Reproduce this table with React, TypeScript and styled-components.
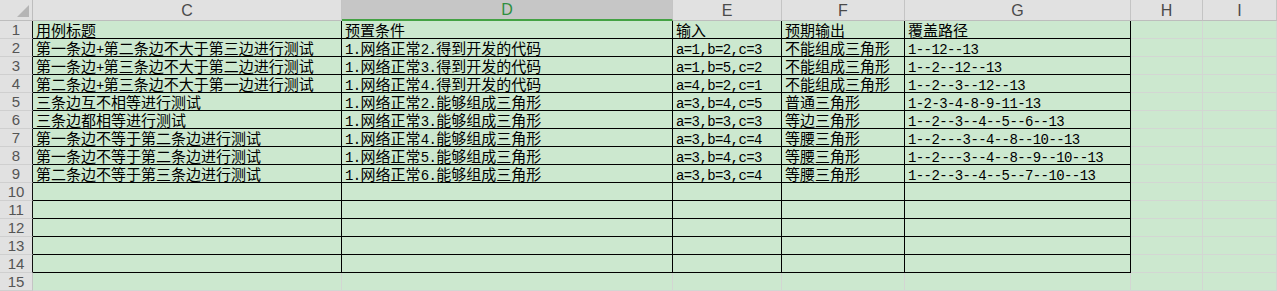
import styled, { createGlobalStyle } from "styled-components";

const GlobalStyle = createGlobalStyle`
  body {
    margin: 0;
    background: #cce8cf;
    overflow: hidden;
  }
`;

const COLS = ["C", "D", "E", "F", "G", "H", "I"];
const ACTIVE_COL = "D";

const rows: string[][] = [
  ["用例标题", "预置条件", "输入", "预期输出", "覆盖路径"],
  ["第一条边+第二条边不大于第三边进行测试", "1.网络正常2.得到开发的代码", "a=1,b=2,c=3", "不能组成三角形", "1--12--13"],
  ["第一条边+第三条边不大于第二边进行测试", "1.网络正常3.得到开发的代码", "a=1,b=5,c=2", "不能组成三角形", "1--2--12--13"],
  ["第二条边+第三条边不大于第一边进行测试", "1.网络正常4.得到开发的代码", "a=4,b=2,c=1", "不能组成三角形", "1--2--3--12--13"],
  ["三条边互不相等进行测试", "1.网络正常2.能够组成三角形", "a=3,b=4,c=5", "普通三角形", "1-2-3-4-8-9-11-13"],
  ["三条边都相等进行测试", "1.网络正常3.能够组成三角形", "a=3,b=3,c=3", "等边三角形", "1--2--3--4--5--6--13"],
  ["第一条边不等于第二条边进行测试", "1.网络正常4.能够组成三角形", "a=3,b=4,c=4", "等腰三角形", "1--2---3--4--8--10--13"],
  ["第一条边不等于第二条边进行测试", "1.网络正常5.能够组成三角形", "a=3,b=4,c=3", "等腰三角形", "1--2---3--4--8--9--10--13"],
  ["第二条边不等于第三条边进行测试", "1.网络正常6.能够组成三角形", "a=3,b=3,c=4", "等腰三角形", "1--2--3--4--5--7--10--13"],
];

// rows 1..14 of C..G carry the black table border
const TABLE_ROWS = 14;
const TABLE_COLS = 5;
const TOTAL_ROWS = 15;

const Sheet = styled.div`
  display: grid;
  grid-template-columns: 33px 309px 331px 109px 123px 226px 72px 74px;
  grid-template-rows: 21px repeat(${TOTAL_ROWS}, 18px);
  width: 1277px;
  font-family: "Noto Sans CJK SC", sans-serif;
`;

const Corner = styled.div`
  background: #e1e1e1;
  border-right: 1px solid #bdbdbd;
  border-bottom: 1px solid #bdbdbd;
  box-sizing: border-box;
  display: flex;
  align-items: flex-end;
  justify-content: flex-end;
  padding: 0 3px 3px 0;
`;

const ColHead = styled.div<{ $active?: boolean }>`
  background: ${(p) => (p.$active ? "#c6c6c6" : "#e1e1e1")};
  border-right: 1px solid #c4c4c4;
  border-bottom: ${(p) => (p.$active ? "2px solid #44a244" : "1px solid #bdbdbd")};
  box-sizing: border-box;
  display: flex;
  align-items: center;
  justify-content: center;
  font-family: "Liberation Sans", Arial, sans-serif;
  font-size: 16px;
  color: ${(p) => (p.$active ? "#2f8f3f" : "#4a4a4a")};
  padding-top: 1px;
`;

const RowHead = styled.div<{ $edge: boolean }>`
  background: #e1e1e1;
  border-right: 1px solid ${(p) => (p.$edge ? "#111" : "#c4c4c4")};
  border-bottom: 1px solid #cfcfcf;
  box-sizing: border-box;
  display: flex;
  align-items: center;
  justify-content: center;
  font-family: "Liberation Sans", Arial, sans-serif;
  font-size: 15px;
  color: #555;
  line-height: 17px;
`;

const Cell = styled.div<{ $line: string }>`
  border-right: 1px solid ${(p) => p.$line};
  border-bottom: 1px solid ${(p) => p.$line};
  box-sizing: border-box;
  padding-left: 3px;
  font-size: 15px;
  line-height: 17px;
  color: #000;
  white-space: nowrap;
  position: relative;
  z-index: 1;
`;

const Latin = styled.span`
  font-family: "Liberation Mono", "DejaVu Sans Mono", monospace;
  font-size: 14px;
  letter-spacing: -0.6px;
`;

function Text({ value }: { value: string }) {
  const parts = value.split(/([\x00-\x7f]+)/);
  return (
    <>
      {parts.map((part, i) =>
        i % 2 === 1 ? <Latin key={i}>{part}</Latin> : part ? <span key={i}>{part}</span> : null
      )}
    </>
  );
}

export default function App() {
  const body = [];
  for (let r = 1; r <= TOTAL_ROWS; r++) {
    const inRows = r <= TABLE_ROWS;
    body.push(
      <RowHead key={`h${r}`} $edge={inRows}>
        {r}
      </RowHead>
    );
    COLS.forEach((_, c) => {
      const inTable = inRows && c < TABLE_COLS;
      const value = rows[r - 1]?.[c] ?? "";
      body.push(
        <Cell key={`${r}-${c}`} $line={inTable ? "#000" : "#d3d6d3"}>
          {value && <Text value={value} />}
        </Cell>
      );
    });
  }

  return (
    <>
      <GlobalStyle />
      <Sheet>
        <Corner>
          <svg width="12" height="12" viewBox="0 0 12 12">
            <polygon points="12,0 12,12 0,12" fill="#b5b5b5" />
          </svg>
        </Corner>
        {COLS.map((c) => (
          <ColHead key={c} $active={c === ACTIVE_COL}>
            {c}
          </ColHead>
        ))}
        {body}
      </Sheet>
    </>
  );
}
